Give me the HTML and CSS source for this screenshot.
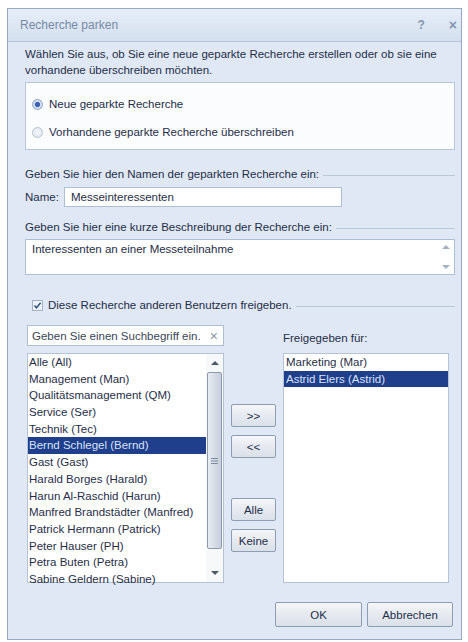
FILE: index.html
```html
<!DOCTYPE html>
<html lang="de">
<head>
<meta charset="utf-8">
<title>Recherche parken</title>
<link rel="stylesheet" href="styles.css">
</head>
<body>
<div class="dialog">
  <div class="titlebar">
    <span class="title">Recherche parken</span>
    <span class="tb-btn help">?</span>
    <span class="tb-btn close">×</span>
  </div>
  <div class="content">
    <p class="intro">Wählen Sie aus, ob Sie eine neue geparkte Recherche erstellen oder ob sie eine<br>vorhandene überschreiben möchten.</p>
    <div class="radiogroup">
      <div class="radio-row"><span class="radio checked"></span><span>Neue geparkte Recherche</span></div>
      <div class="radio-row"><span class="radio"></span><span>Vorhandene geparkte Recherche überschreiben</span></div>
    </div>
    <div class="section-label label-name"><span>Geben Sie hier den Namen der geparkten Recherche ein:</span><span class="rule"></span></div>
    <div class="name-row"><span class="name-label">Name:</span><div class="textbox name-box">Messeinteressenten</div></div>
    <div class="section-label label-desc"><span>Geben Sie hier eine kurze Beschreibung der Recherche ein:</span><span class="rule"></span></div>
    <div class="textarea">
      <span class="ta-text">Interessenten an einer Messeteilnahme</span>
      <div class="mini-scroll"><span class="tri up light"></span><span class="tri down light"></span></div>
    </div>
    <div class="section-label label-share">
      <span class="checkbox"><svg width="9" height="9" viewBox="0 0 9 9"><path d="M1.5 4.5 L3.5 6.8 L7.6 1.8" fill="none" stroke="#3a5683" stroke-width="1.6"/></svg></span>
      <span>Diese Recherche anderen Benutzern freigeben.</span><span class="rule"></span>
    </div>
    <div class="share">
      <div class="col-left">
        <div class="textbox search"><span class="placeholder">Geben Sie einen Suchbegriff ein.</span><span class="clear">×</span></div>
        <div class="listbox left-list">
          <ul class="items">
            <li>Alle (All)</li>
            <li>Management (Man)</li>
            <li>Qualitätsmanagement (QM)</li>
            <li>Service (Ser)</li>
            <li>Technik (Tec)</li>
            <li class="selected">Bernd Schlegel (Bernd)</li>
            <li>Gast (Gast)</li>
            <li>Harald Borges (Harald)</li>
            <li>Harun Al-Raschid (Harun)</li>
            <li>Manfred Brandstädter (Manfred)</li>
            <li>Patrick Hermann (Patrick)</li>
            <li>Peter Hauser (PH)</li>
            <li>Petra Buten (Petra)</li>
            <li>Sabine Geldern (Sabine)</li>
          </ul>
          <div class="vscroll">
            <div class="sb-btn"><span class="tri up"></span></div>
            <div class="sb-thumb"><svg width="7" height="6" viewBox="0 0 7 6"><path d="M0 0.5H7M0 3H7M0 5.5H7" stroke="#7d8ba0" stroke-width="1"/></svg></div>
            <div class="sb-track"></div>
            <div class="sb-btn"><span class="tri down"></span></div>
          </div>
        </div>
      </div>
      <div class="col-mid">
        <button class="btn small first">&gt;&gt;</button>
        <button class="btn small">&lt;&lt;</button>
        <button class="btn small gap">Alle</button>
        <button class="btn small">Keine</button>
      </div>
      <div class="col-right">
        <div class="right-label">Freigegeben für:</div>
        <div class="listbox right-list">
          <ul class="items">
            <li>Marketing (Mar)</li>
            <li class="selected">Astrid Elers (Astrid)</li>
          </ul>
        </div>
      </div>
    </div>
    <div class="footer">
      <button class="btn ok">OK</button>
      <button class="btn cancel">Abbrechen</button>
    </div>
  </div>
</div>
</body>
</html>
```
FILE: styles.css
```css
* { box-sizing: border-box; }
body {
  margin: 0;
  background: #ffffff;
  font-family: "Liberation Sans", Arial, sans-serif;
  font-size: 11.5px;
  color: #1f2e48;
}
.dialog {
  margin: 8px 0 0 7px;
  width: 455px;
  height: 632px;
  border: 1px solid #98aac3;
  background: #dfe8f4;
  display: flex;
  flex-direction: column;
}
.titlebar {
  height: 33px;
  flex: none;
  display: flex;
  align-items: center;
  padding: 0 4px 0 12px;
  background: linear-gradient(#e6eef8, #d4e0ef);
  border-bottom: 1px solid #b9c9dd;
}
.title {
  flex: 1;
  color: #7889a3;
  font-size: 12px;
}
.tb-btn {
  color: #8496ae;
  font-weight: bold;
  font-size: 12px;
}
.help { margin-right: 24px; }
.close { font-size: 14px; }
.content {
  flex: 1;
  padding: 4px 6px 0 17px;
  display: flex;
  flex-direction: column;
}
.intro {
  margin: 0;
  line-height: 16px;
}
.radiogroup {
  margin-top: 4px;
  height: 68px;
  background: #fbfcfe;
  border: 1px solid #b6c6da;
  padding: 7px 6px 3px;
}
.radio-row {
  height: 28px;
  display: flex;
  align-items: center;
  gap: 6px;
}
.radio {
  width: 11px;
  height: 11px;
  border-radius: 50%;
  border: 1px solid #b4c1d2;
  background: radial-gradient(circle, #f4f6fa 0, #dfe5ee 100%);
}
.radio.checked {
  border-color: #8aa3c8;
  background: radial-gradient(circle, #3e63b0 0, #3e63b0 35%, #c9d7ee 45%, #e9eff8 100%);
}
.section-label {
  display: flex;
  align-items: center;
  line-height: 16px;
  white-space: nowrap;
}
.rule {
  flex: 1;
  height: 1px;
  background: #b9c7d9;
  margin-left: 4px;
  margin-top: 2px;
}
.label-name { margin-top: 16px; }
.label-desc { margin-top: 12px; }
.label-share { margin-top: 22px; padding-left: 7px; }
.name-row {
  margin-top: 5px;
  display: flex;
  align-items: center;
}
.name-label { width: 39px; }
.textbox {
  background: #ffffff;
  border: 1px solid #adbfd5;
  display: flex;
  align-items: center;
  padding: 0 6px;
}
.name-box { width: 278px; height: 20px; }
.textarea {
  margin-top: 4px;
  height: 36px;
  background: #ffffff;
  border: 1px solid #adbfd5;
  display: flex;
  padding: 3px 0 0 6px;
}
.ta-text { flex: 1; }
.mini-scroll {
  width: 17px;
  display: flex;
  flex-direction: column;
  align-items: center;
  justify-content: space-between;
  padding: 5px 0 5px;
  margin-top: -3px;
}
.tri {
  width: 0;
  height: 0;
  border-left: 4px solid transparent;
  border-right: 4px solid transparent;
}
.tri.up { border-bottom: 4px solid #4e5a6c; }
.tri.down { border-top: 4px solid #4e5a6c; }
.tri.light.up { border-bottom-color: #a6b3c5; }
.tri.light.down { border-top-color: #a6b3c5; }
.checkbox {
  width: 11px;
  height: 11px;
  border: 1px solid #a3b2c6;
  background: #eef2f8;
  display: flex;
  align-items: center;
  justify-content: center;
  margin-right: 5px;
}
.share {
  margin-top: 12px;
  display: flex;
  gap: 7px;
  padding-left: 2px;
}
.col-left {
  width: 197px;
  display: flex;
  flex-direction: column;
  gap: 7px;
}
.search {
  height: 21px;
  padding: 0 5px 0 4px;
  justify-content: space-between;
}
.placeholder { color: #3a465a; }
.clear { color: #8a94a4; font-size: 14px; }
.listbox {
  background: #ffffff;
  border: 1px solid #b4c3d6;
  height: 230px;
  display: flex;
}
.items {
  list-style: none;
  margin: 0;
  padding: 0;
  flex: 1;
}
.items li {
  height: 16.7px;
  line-height: 16.7px;
  padding-left: 1px;
  white-space: nowrap;
}
.items li.selected {
  background: #1f3e8c;
  color: #d9e2f5;
}
.vscroll {
  width: 17px;
  display: flex;
  flex-direction: column;
  background: #f7f8fa;
}
.sb-btn {
  height: 18px;
  display: flex;
  align-items: center;
  justify-content: center;
}
.sb-thumb {
  height: 177px;
  margin: 0 1px;
  border: 1px solid #8e9aab;
  border-radius: 2px;
  background: linear-gradient(90deg, #e9edf3, #d3dae4 60%, #c6cfdb);
  display: flex;
  align-items: center;
  justify-content: center;
}
.sb-track { flex: 1; }
.col-mid {
  width: 45px;
  display: flex;
  flex-direction: column;
}
.btn {
  font-family: inherit;
  font-size: 11.5px;
  color: #1f2e48;
  border: 1px solid #8d9db3;
  border-radius: 2px;
  background: linear-gradient(#f4f6f9, #e6eaf0 50%, #dbe1e9);
  padding: 0;
}
.btn.small { height: 23px; width: 45px; margin-top: 8px; }
.btn.small.first { margin-top: 79px; }
.btn.small.gap { margin-top: 40px; }
.col-right {
  width: 166px;
  display: flex;
  flex-direction: column;
}
.right-label {
  height: 28px;
  line-height: 26px;
}
.right-list { height: 230px; }
.right-list .items li { padding-left: 2px; }
.footer {
  margin-top: 19px;
  display: flex;
  justify-content: flex-end;
  gap: 5px;
  padding-right: 2px;
}
.btn.ok { width: 87px; height: 25px; }
.btn.cancel { width: 86px; height: 25px; }
```
